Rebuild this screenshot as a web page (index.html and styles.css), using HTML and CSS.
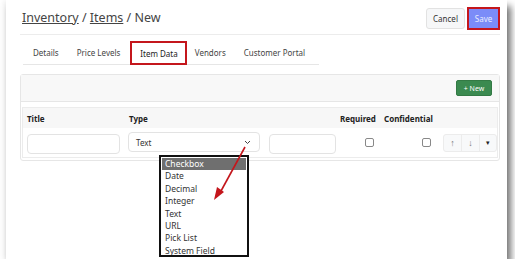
FILE: index.html
```html
<!DOCTYPE html>
<html>
<head>
  <title>Inventory - New Item</title>
  <link rel="stylesheet" href="styles.css">
</head>
<body>
  <div class="page">
    <header class="topbar">
      <h1 class="crumbs"><a href="#">Inventory</a> / <a href="#">Items</a> / New</h1>
      <div class="actions">
        <button class="btn cancel">Cancel</button>
        <button class="btn save">Save</button>
      </div>
    </header>

    <nav class="tabs">
      <a class="tab" href="#">Details</a>
      <a class="tab" href="#">Price Levels</a>
      <a class="tab active" href="#">Item Data</a>
      <a class="tab" href="#">Vendors</a>
      <a class="tab" href="#">Customer Portal</a>
    </nav>

    <div class="card">
      <div class="card-head">
        <button class="btn new">+ New</button>
      </div>
      <div class="card-body">
        <div class="fields">
          <div class="row head">
            <div class="cell">Title</div>
            <div class="cell">Type</div>
            <div class="cell"></div>
            <div class="cell">Required</div>
            <div class="cell">Confidential</div>
            <div class="cell"></div>
          </div>
          <div class="row">
            <div class="cell"><input class="input title-input" type="text"></div>
            <div class="cell">
              <div class="select">
                <span>Text</span>
                <svg class="chev" width="7" height="5" viewBox="0 0 7 5"><path d="M1 1l2.5 2.5L6 1" fill="none" stroke="#444" stroke-width="1"/></svg>
              </div>
            </div>
            <div class="cell"><input class="input extra-input" type="text"></div>
            <div class="cell check-cell req"><span class="check"></span></div>
            <div class="cell check-cell conf"><span class="check"></span></div>
            <div class="cell">
              <div class="btn-group">
                <span class="seg">&#8593;</span>
                <span class="seg">&#8595;</span>
                <span class="seg caret">&#9662;</span>
              </div>
            </div>
          </div>
        </div>
      </div>
    </div>

    <!-- open type list, annotated -->
    <ul class="type-list">
      <li class="picked">Checkbox</li>
      <li>Date</li>
      <li>Decimal</li>
      <li>Integer</li>
      <li>Text</li>
      <li>URL</li>
      <li>Pick List</li>
      <li>System Field</li>
    </ul>
    <svg class="pointer" width="40" height="58" viewBox="0 0 40 58">
      <line x1="35" y1="2" x2="11" y2="46" stroke="#c4161c" stroke-width="1.6"/>
      <path d="M4 55 L7 42 L14 47 Z" fill="#c4161c"/>
    </svg>
  </div>
</body>
</html>
```

FILE: styles.css
```css
body {
  margin: 0;
  background-color: #fff;
  font-family: "Noto Sans", "Liberation Sans", sans-serif;
  color: #333;
  overflow: hidden;
}

.page {
  position: relative;
  margin-left: 6px;
  width: 501px;
  height: 259px;
  padding: 0 7px 0 14px;
  box-sizing: border-box;
  background-color: #fff;
  box-shadow: 4px 6px 7px rgba(0, 0, 0, 0.55), -3px 0 5px rgba(0, 0, 0, 0.05);
}

.topbar {
  display: flex;
  align-items: center;
  justify-content: space-between;
  height: 34px;
  border-bottom: 1px solid #ececec;
}

.crumbs {
  margin: 0 0 0 2px;
  font-size: 12.5px;
  font-weight: normal;
  color: #444;
}

.crumbs a {
  color: #444;
  text-decoration: underline;
}

.actions {
  display: flex;
  align-items: center;
  gap: 2px;
  padding-top: 3px;
}

.btn {
  font-family: inherit;
  font-size: 8px;
  border-radius: 3px;
  padding: 0;
  cursor: pointer;
}

.cancel {
  width: 39px;
  height: 21px;
  color: #333;
  background-color: #f6f7f8;
  border: 1px solid #e2e2e2;
}

.save {
  width: 33px;
  height: 23px;
  color: #e9ecff;
  background-color: #7b8cf8;
  border: 2px solid #c4161c;
  border-radius: 0;
}

.tabs {
  display: flex;
  width: fit-content;
  height: 29px;
  margin-left: 3px;
  padding-right: 5px;
  border-bottom: 1px solid #e6e6e6;
}

.tab {
  display: flex;
  align-items: center;
  padding: 0 9px;
  margin-top: 6px;
  font-size: 8px;
  color: #444;
  white-space: nowrap;
  text-decoration: none;
}

.tab:first-child {
  padding-left: 10px;
}

.tab.active {
  outline: 2px solid #c4161c;
  outline-offset: -1px;
  margin: 7px 0 0 2px;
  padding: 0 8px 0 9px;
  color: #222;
}

.card {
  margin-top: 9px;
  border: 1px solid #e6e6e6;
  border-radius: 3px;
}

.card-head {
  display: flex;
  justify-content: flex-end;
  align-items: center;
  height: 26px;
  padding-right: 7px;
  background-color: #f8f8f8;
  border-bottom: 1px solid #e6e6e6;
}

.new {
  width: 36px;
  height: 16px;
  color: #fff;
  font-size: 7px;
  background-color: #3b8a50;
  border: 1px solid #337a45;
  border-radius: 2px;
}

.card-body {
  padding: 5px 1px 2px 1px;
}

.fields {
  border: 1px solid #ececec;
}

.row {
  display: grid;
  grid-template-columns: 102px 140px 71px 44px 60px 57px;
  align-items: center;
}

.row.head {
  height: 20px;
  background-color: #f7f7f7;
  font-size: 8px;
  font-weight: bold;
  color: #222;
}

.row.head .cell {
  padding-left: 4px;
}

.row:not(.head) {
  height: 29px;
}

.input {
  box-sizing: border-box;
  height: 20px;
  margin-top: -1px;
  border: 1px solid #e3e3e3;
  border-radius: 4px;
  background-color: #fff;
}

.title-input {
  width: 93px;
  margin-left: 4px;
}

.extra-input {
  width: 67px;
  margin-left: 4px;
}

.select {
  box-sizing: border-box;
  display: flex;
  align-items: center;
  justify-content: space-between;
  width: 132px;
  height: 20px;
  margin: -1px 0 0 3px;
  padding: 0 8px 0 7px;
  border: 1px solid #e3e3e3;
  border-radius: 4px;
  font-size: 8px;
  color: #333;
}

.check-cell {
  display: flex;
}

.req {
  padding-left: 29px;
}

.conf {
  padding-left: 42px;
}

.check {
  width: 7px;
  height: 7px;
  border: 1px solid #888;
  border-radius: 2px;
}

.btn-group {
  display: flex;
  width: 54px;
  height: 18px;
  margin-left: 3px;
  border: 1px solid #ececec;
  border-radius: 3px;
  background-color: #f8f9fa;
  box-sizing: border-box;
}

.seg {
  flex: 0 0 17px;
  display: flex;
  align-items: center;
  justify-content: center;
  font-size: 9px;
  color: #777;
  border-right: 1px solid #ececec;
}

.seg.caret {
  flex: 1;
  border-right: none;
  color: #222;
  font-size: 7px;
}

.type-list {
  position: absolute;
  left: 153px;
  top: 155px;
  width: 84px;
  height: 96px;
  margin: 0;
  padding: 1px;
  list-style: none;
  overflow: hidden;
  background-color: #fff;
  border: 2px solid #111;
  font-size: 8.5px;
  color: #333;
}

.type-list li {
  height: 12.4px;
  line-height: 12.4px;
  padding-left: 3px;
}

.type-list li.picked {
  background-color: #6f6f6f;
  color: #fff;
}

.pointer {
  position: absolute;
  left: 204px;
  top: 145px;
}
```
